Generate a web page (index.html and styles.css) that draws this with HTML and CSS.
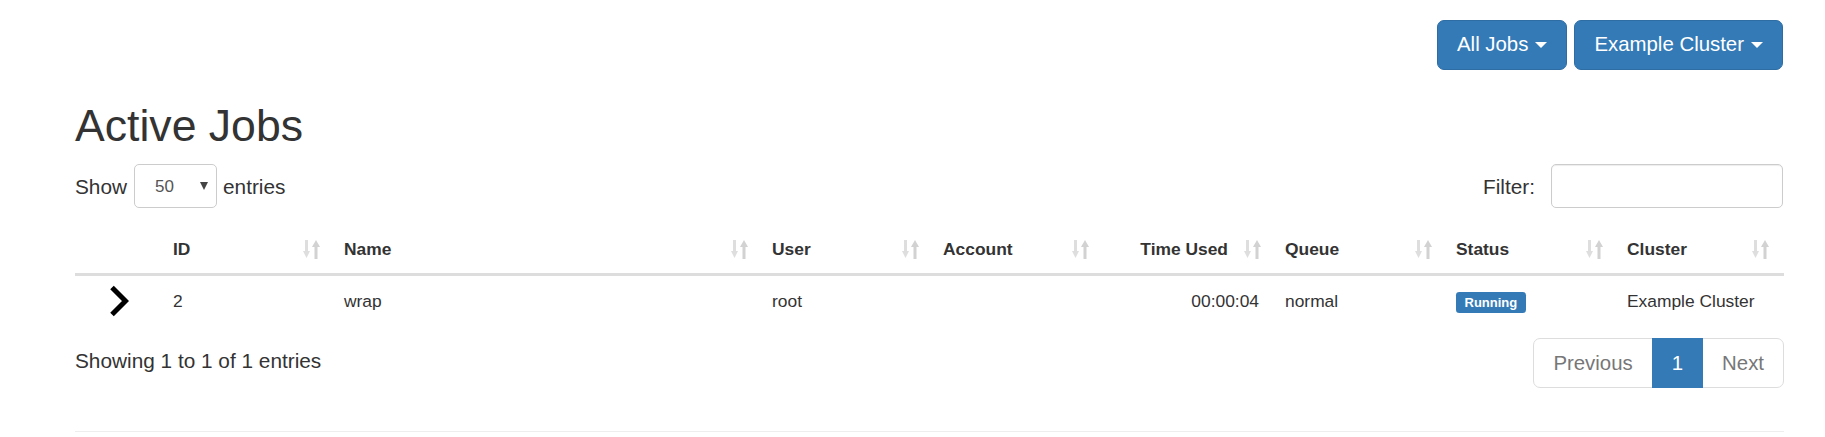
FILE: index.html
```html
<!DOCTYPE html>
<html lang="en">
<head>
<meta charset="utf-8">
<title>Active Jobs</title>
<link rel="stylesheet" href="styles.css">
</head>
<body>
<div class="page">
  <div class="topbar">
    <button class="btn">All Jobs<span class="caret"></span></button>
    <button class="btn">Example Cluster<span class="caret"></span></button>
  </div>

  <h1 class="title">Active Jobs</h1>

  <div class="controls">
    <label class="length">Show
      <span class="select-wrap">
        <select class="select"><option>50</option></select>
      </span>
      entries</label>
    <label class="filter">Filter:<input class="filter-input" type="search"></label>
  </div>

  <table class="jobs">
    <colgroup>
      <col class="c-ctl"><col class="c-std"><col class="c-name"><col class="c-std"><col class="c-acc"><col class="c-time"><col class="c-std"><col class="c-std"><col class="c-last">
    </colgroup>
    <thead>
      <tr>
        <th></th>
        <th><div class="th-in"><span>ID</span><svg class="sort" viewBox="0 0 17 19"><rect x="2" y="0" width="3" height="12"/><polygon points="0,11 7,11 3.5,18"/><polygon class="up" points="9,7 17,7 13,0"/><rect class="up" x="11.5" y="6" width="3" height="13"/></svg></div></th>
        <th><div class="th-in"><span>Name</span><svg class="sort" viewBox="0 0 17 19"><rect x="2" y="0" width="3" height="12"/><polygon points="0,11 7,11 3.5,18"/><polygon class="up" points="9,7 17,7 13,0"/><rect class="up" x="11.5" y="6" width="3" height="13"/></svg></div></th>
        <th><div class="th-in"><span>User</span><svg class="sort" viewBox="0 0 17 19"><rect x="2" y="0" width="3" height="12"/><polygon points="0,11 7,11 3.5,18"/><polygon class="up" points="9,7 17,7 13,0"/><rect class="up" x="11.5" y="6" width="3" height="13"/></svg></div></th>
        <th><div class="th-in"><span>Account</span><svg class="sort" viewBox="0 0 17 19"><rect x="2" y="0" width="3" height="12"/><polygon points="0,11 7,11 3.5,18"/><polygon class="up" points="9,7 17,7 13,0"/><rect class="up" x="11.5" y="6" width="3" height="13"/></svg></div></th>
        <th><div class="th-in right"><span>Time Used</span><svg class="sort" viewBox="0 0 17 19"><rect x="2" y="0" width="3" height="12"/><polygon points="0,11 7,11 3.5,18"/><polygon class="up" points="9,7 17,7 13,0"/><rect class="up" x="11.5" y="6" width="3" height="13"/></svg></div></th>
        <th><div class="th-in"><span>Queue</span><svg class="sort" viewBox="0 0 17 19"><rect x="2" y="0" width="3" height="12"/><polygon points="0,11 7,11 3.5,18"/><polygon class="up" points="9,7 17,7 13,0"/><rect class="up" x="11.5" y="6" width="3" height="13"/></svg></div></th>
        <th><div class="th-in"><span>Status</span><svg class="sort" viewBox="0 0 17 19"><rect x="2" y="0" width="3" height="12"/><polygon points="0,11 7,11 3.5,18"/><polygon class="up" points="9,7 17,7 13,0"/><rect class="up" x="11.5" y="6" width="3" height="13"/></svg></div></th>
        <th><div class="th-in"><span>Cluster</span><svg class="sort" viewBox="0 0 17 19"><rect x="2" y="0" width="3" height="12"/><polygon points="0,11 7,11 3.5,18"/><polygon class="up" points="9,7 17,7 13,0"/><rect class="up" x="11.5" y="6" width="3" height="13"/></svg></div></th>
      </tr>
    </thead>
    <tbody>
      <tr>
        <td class="ctl"><svg class="chev" viewBox="0 0 20 32"><polyline points="3,2.5 16.5,16 3,29.5"/></svg></td>
        <td>2</td>
        <td>wrap</td>
        <td>root</td>
        <td></td>
        <td class="num">00:00:04</td>
        <td>normal</td>
        <td><span class="label">Running</span></td>
        <td>Example Cluster</td>
      </tr>
    </tbody>
  </table>

  <div class="footer">
    <div class="info">Showing 1 to 1 of 1 entries</div>
    <ul class="pagination">
      <li class="page-item first">Previous</li>
      <li class="page-item active">1</li>
      <li class="page-item last">Next</li>
    </ul>
  </div>

  <hr class="rule">
</div>
</body>
</html>
```

FILE: styles.css
```css
html, body {
  margin: 0;
  padding: 0;
  background: #fff;
}
body {
  font-family: "Liberation Sans", Arial, Helvetica, sans-serif;
  color: #333;
}
.page {
  padding: 0 41px 0 75px;
}

/* top buttons */
.topbar {
  display: flex;
  justify-content: flex-end;
  gap: 7px;
  padding-top: 19.5px;
  margin-right: 1px;
}
.btn {
  display: flex;
  align-items: center;
  font-family: inherit;
  font-size: 20.4px;
  line-height: 28px;
  padding: 9px 19px 11px;
  border: 1px solid #2e6da4;
  background: #337ab7;
  color: #fff;
  border-radius: 7px;
}
.caret {
  display: inline-block;
  width: 0;
  height: 0;
  margin-left: 7px;
  margin-top: 2px;
  border-top: 6px solid #fff;
  border-left: 6px solid transparent;
  border-right: 6px solid transparent;
}

/* heading */
.title {
  margin: 32px 0 0;
  font-size: 44.6px;
  line-height: 48px;
  font-weight: 400;
}

/* controls */
.controls {
  display: flex;
  justify-content: space-between;
  align-items: center;
  margin-top: 14.5px;
  font-size: 20.8px;
  line-height: 25px;
}
.length, .filter {
  display: flex;
  align-items: center;
  gap: 6.5px;
}
.select-wrap {
  position: relative;
  display: block;
}
.select-wrap::after {
  content: "";
  position: absolute;
  right: 9px;
  top: 18px;
  border-top: 8px solid #444;
  border-left: 4px solid transparent;
  border-right: 4px solid transparent;
  pointer-events: none;
}
.select {
  -webkit-appearance: none;
  appearance: none;
  display: block;
  box-sizing: border-box;
  width: 83px;
  height: 44px;
  padding: 0 0 0 20.5px;
  font-family: inherit;
  font-size: 17px;
  color: #555;
  background: #fff;
  border: 1px solid #ccc;
  border-radius: 5px;
  margin-bottom: 0;
}
.filter {
  gap: 16px;
  margin-right: 1px;
}
.filter-input {
  box-sizing: border-box;
  width: 232px;
  height: 44px;
  border: 1px solid #ccc;
  border-radius: 5px;
  box-shadow: inset 0 1px 1px rgba(0,0,0,0.075);
  font-family: inherit;
  font-size: 17px;
  padding: 0 10px;
  margin: 0;
}

/* table */
.jobs {
  margin-top: 18.5px;
  width: 100%;
  border-collapse: collapse;
  table-layout: fixed;
  font-size: 17.4px;
  line-height: 25px;
}
.c-ctl { width: 89px; }
.c-std { width: 171px; }
.c-name { width: 428px; }
.c-acc { width: 170px; }
.c-time { width: 172px; }
.c-last { width: 166px; }

.jobs th {
  padding: 10px 15px 11px 9px;
  border-bottom: 3px solid #ddd;
  text-align: left;
  vertical-align: bottom;
  font-weight: 700;
  white-space: nowrap;
}
.th-in {
  display: flex;
  justify-content: space-between;
  align-items: center;
}
.th-in.right {
  justify-content: flex-end;
  gap: 16px;
}
.sort {
  width: 17px;
  height: 19px;
  flex: none;
  fill: #dedede;
}
.sort .up {
  fill: #d2d2d2;
}

.jobs td {
  padding: 9.5px 9px;
  vertical-align: middle;
  white-space: nowrap;
}
.jobs td.ctl {
  text-align: center;
  padding-left: 0;
  padding-right: 1px;
}
.chev {
  display: block;
  margin: 0 auto;
  width: 20px;
  height: 32px;
  fill: none;
  stroke: #000;
  stroke-width: 5;
  stroke-linejoin: miter;
  stroke-linecap: butt;
}
.jobs td.num {
  text-align: right;
  padding-right: 17px;
}
.label {
  display: inline;
  padding: 2.6px 8.5px 3.9px;
  font-size: 13px;
  font-weight: 700;
  line-height: 1;
  color: #fff;
  background: #337ab7;
  border-radius: 3.3px;
}

/* footer */
.footer {
  display: flex;
  justify-content: space-between;
  align-items: flex-start;
  margin-top: 11.5px;
}
.info {
  padding-top: 8px;
  font-size: 20.8px;
  line-height: 30px;
}
.pagination {
  display: flex;
  list-style: none;
  margin: 0;
  padding: 0;
}
.page-item {
  padding: 10px 19px;
  font-size: 20.4px;
  line-height: 28px;
  color: #777;
  background: #fff;
  border: 1px solid #ddd;
  margin-left: -1px;
}
.page-item.first {
  margin-left: 0;
  border-radius: 7px 0 0 7px;
}
.page-item.last {
  border-radius: 0 7px 7px 0;
}
.page-item.active {
  color: #fff;
  background: #337ab7;
  border-color: #337ab7;
  position: relative;
}

.rule {
  margin: 42.5px 0 0;
  border: 0;
  border-top: 1px solid #eee;
  height: 0;
}
```
